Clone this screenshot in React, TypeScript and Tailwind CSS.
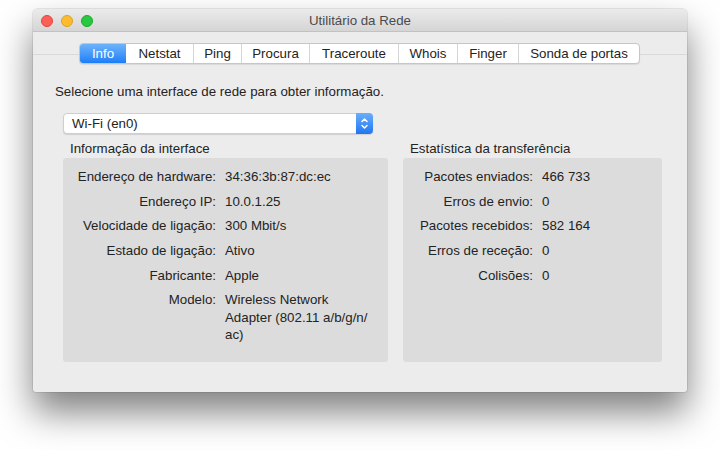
const tabs = [
  { name: "Info", w: "w-[46px]" },
  { name: "Netstat", w: "w-[67px]" },
  { name: "Ping", w: "w-[48px]" },
  { name: "Procura", w: "w-[68px]" },
  { name: "Traceroute", w: "w-[89px]" },
  { name: "Whois", w: "w-[59px]" },
  { name: "Finger", w: "w-[61px]" },
  { name: "Sonda de portas", w: "w-[121px]" },
];

const iface: [string, string[]][] = [
  ["Endereço de hardware:", ["34:36:3b:87:dc:ec"]],
  ["Endereço IP:", ["10.0.1.25"]],
  ["Velocidade de ligação:", ["300 Mbit/s"]],
  ["Estado de ligação:", ["Ativo"]],
  ["Fabricante:", ["Apple"]],
  ["Modelo:", ["Wireless Network", "Adapter (802.11 a/b/g/n/", "ac)"]],
];

const stats: [string, string[]][] = [
  ["Pacotes enviados:", ["466 733"]],
  ["Erros de envio:", ["0"]],
  ["Pacotes recebidos:", ["582 164"]],
  ["Erros de receção:", ["0"]],
  ["Colisões:", ["0"]],
];

function Rows({ rows, label }: { rows: [string, string[]][]; label: string }) {
  return (
    <div className={`grid ${label} gap-x-[9px] gap-y-[7.2px] pt-[10px] leading-[17.5px]`}>
      {rows.map(([k, v]) => (
        <div key={k} className="contents">
          <div className="text-right whitespace-nowrap">{k}</div>
          <div className="whitespace-nowrap">
            {v.map((line) => (
              <div key={line}>{line}</div>
            ))}
          </div>
        </div>
      ))}
    </div>
  );
}

export default function App() {
  return (
    <div
      className="w-[720px] h-[450px] bg-white pt-[9px] pl-[33px] text-[13.3px] text-[#232323] overflow-hidden"
      style={{ fontFamily: '"Liberation Sans", Arial, sans-serif' }}
    >
      <div className="w-[654px] h-[383px] bg-[#ececec] rounded-t-[5px] rounded-b-[3px] shadow-[0_20px_36px_rgba(0,0,0,0.5),0_0_0_1px_rgba(0,0,0,0.08)] flex flex-col">
        {/* title bar */}
        <div className="h-[23px] rounded-t-[5px] bg-gradient-to-b from-[#ebebeb] to-[#d5d5d5] border-b border-[#c2c2c2] flex items-center relative">
          <div className="flex gap-[8px] pl-[8px] pt-px">
            <span className="w-[12px] h-[12px] rounded-full bg-[#fc5f57] border border-[#e0443e]" />
            <span className="w-[12px] h-[12px] rounded-full bg-[#fdbc2e] border border-[#dea123]" />
            <span className="w-[12px] h-[12px] rounded-full bg-[#28c840] border border-[#1aab29]" />
          </div>
          <div className="absolute inset-0 flex items-center justify-center pt-px text-[#4b4b4b]">
            Utilitário da Rede
          </div>
        </div>

        {/* tabs */}
        <div className="relative mt-[11px] h-[21px]">
          <div className="absolute left-0 right-0 top-[11px] h-px bg-[#d9d9d9]" />
          <div className="relative ml-[46px] flex h-[21px] w-fit rounded-[4px] bg-white border border-[#c6c6c6] shadow-[0_1px_1px_rgba(0,0,0,0.08)] overflow-hidden">
            {tabs.map((t, i) => (
              <div
                key={t.name}
                className={`${t.w} flex items-center justify-center ${
                  i === 0
                    ? "bg-gradient-to-b from-[#6db3fb] to-[#1a7ef7] text-white"
                    : "border-l border-[#d6d6d6]"
                } ${i === 1 ? "border-l-0" : ""}`}
              >
                {t.name}
              </div>
            ))}
          </div>
        </div>

        <div className="pl-[22px] mt-[20px] leading-[16px]">
          Selecione uma interface de rede para obter informação.
        </div>

        {/* popup */}
        <div className="ml-[30px] mt-[13px] w-[310px] h-[21px] bg-white rounded-[4px] border border-[#cfcfcf] shadow-[0_1px_1px_rgba(0,0,0,0.12)] flex items-center">
          <span className="flex-1 pl-[8px]">Wi-Fi (en0)</span>
          <div className="w-[17px] h-[21px] -mr-px -my-px rounded-r-[4px] bg-gradient-to-b from-[#68aefb] to-[#1e76f3] flex items-center justify-center">
            <svg width="9" height="13" viewBox="0 0 9 13" fill="none" stroke="white" strokeWidth="1.5" strokeLinecap="round" strokeLinejoin="round">
              <path d="M2 4.5L4.5 2L7 4.5" />
              <path d="M2 8.5L4.5 11L7 8.5" />
            </svg>
          </div>
        </div>

        {/* panels */}
        <div className="flex gap-[15px] ml-[30px] mt-[7px]">
          <div className="w-[325px]">
            <div className="pl-[7px] leading-[16px] h-[17px]">Informação da interface</div>
            <div className="h-[204px] bg-[#dcdcdc] rounded-[3px]">
              <Rows rows={iface} label="grid-cols-[153px_1fr]" />
            </div>
          </div>
          <div className="w-[259px]">
            <div className="pl-[7px] leading-[16px] h-[17px]">Estatística da transferência</div>
            <div className="h-[204px] bg-[#dcdcdc] rounded-[3px]">
              <Rows rows={stats} label="grid-cols-[130px_1fr]" />
            </div>
          </div>
        </div>
      </div>
    </div>
  );
}
